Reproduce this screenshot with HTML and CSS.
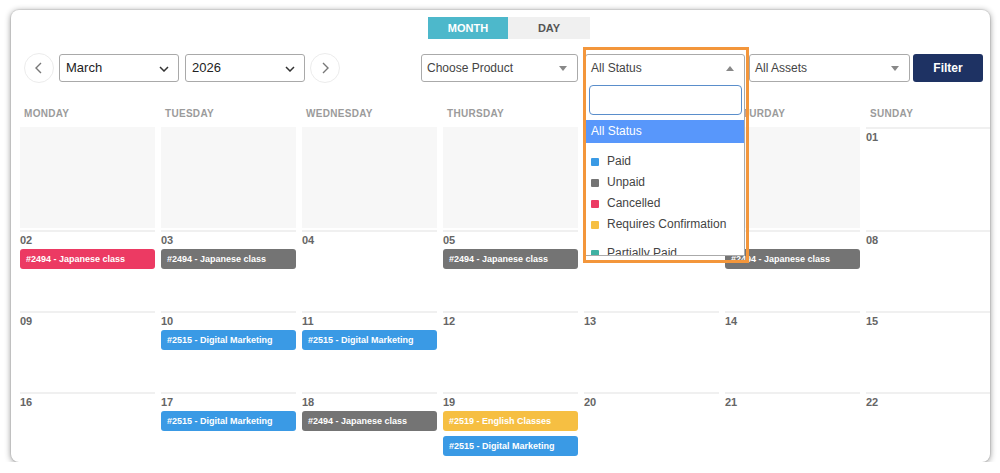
FILE: index.html
```html
<!DOCTYPE html>
<html lang="en">
<head>
    <meta charset="UTF-8">
    <title>Bookings calendar</title>
    <link rel="stylesheet" href="styles.css">
</head>
<body>
    <div class="card">
        <div class="view-toggle">
            <button class="view-btn active">MONTH</button>
            <button class="view-btn">DAY</button>
        </div>

        <div class="toolbar">
            <button class="nav-btn nav-prev">
                <svg width="10" height="12" viewBox="0 0 10 12"><path d="M7 1 L2 6 L7 11" fill="none" stroke="#777" stroke-width="1.4"/></svg>
            </button>
            <div class="select select-month">March
                <svg class="chev" width="10" height="6" viewBox="0 0 10 6"><path d="M1 1 L5 5 L9 1" fill="none" stroke="#333" stroke-width="1.5"/></svg>
            </div>
            <div class="select select-year">2026
                <svg class="chev" width="10" height="6" viewBox="0 0 10 6"><path d="M1 1 L5 5 L9 1" fill="none" stroke="#333" stroke-width="1.5"/></svg>
            </div>
            <button class="nav-btn nav-next">
                <svg width="10" height="12" viewBox="0 0 10 12"><path d="M3 1 L8 6 L3 11" fill="none" stroke="#777" stroke-width="1.4"/></svg>
            </button>

            <div class="s2 s2-product">Choose Product <span class="tri"></span></div>
            <div class="s2 s2-status">All Status <span class="tri up"></span></div>
            <div class="s2 s2-assets">All Assets <span class="tri"></span></div>
            <button class="filter-btn">Filter</button>
        </div>

        <div class="calendar">
            <div class="day-names">
                <div>Monday</div>
                <div>Tuesday</div>
                <div>Wednesday</div>
                <div>Thursday</div>
                <div>Friday</div>
                <div>Saturday</div>
                <div>Sunday</div>
            </div>

            <div class="week week-first">
                <div class="cell empty"></div>
                <div class="cell empty"></div>
                <div class="cell empty"></div>
                <div class="cell empty"></div>
                <div class="cell empty"></div>
                <div class="cell empty"></div>
                <div class="cell"><div class="num">01</div></div>
            </div>

            <div class="week">
                <div class="cell"><div class="num">02</div><div class="event cancelled">#2494 - Japanese class</div></div>
                <div class="cell"><div class="num">03</div><div class="event unpaid">#2494 - Japanese class</div></div>
                <div class="cell"><div class="num">04</div></div>
                <div class="cell"><div class="num">05</div><div class="event unpaid">#2494 - Japanese class</div></div>
                <div class="cell"><div class="num">06</div></div>
                <div class="cell"><div class="num">07</div><div class="event unpaid">#2494 - Japanese class</div></div>
                <div class="cell"><div class="num">08</div></div>
            </div>

            <div class="week">
                <div class="cell"><div class="num">09</div></div>
                <div class="cell"><div class="num">10</div><div class="event paid">#2515 - Digital Marketing</div></div>
                <div class="cell"><div class="num">11</div><div class="event paid">#2515 - Digital Marketing</div></div>
                <div class="cell"><div class="num">12</div></div>
                <div class="cell"><div class="num">13</div></div>
                <div class="cell"><div class="num">14</div></div>
                <div class="cell"><div class="num">15</div></div>
            </div>

            <div class="week">
                <div class="cell"><div class="num">16</div></div>
                <div class="cell"><div class="num">17</div><div class="event paid">#2515 - Digital Marketing</div></div>
                <div class="cell"><div class="num">18</div><div class="event unpaid">#2494 - Japanese class</div></div>
                <div class="cell"><div class="num">19</div><div class="event pending">#2519 - English Classes</div><div class="event paid">#2515 - Digital Marketing</div></div>
                <div class="cell"><div class="num">20</div></div>
                <div class="cell"><div class="num">21</div></div>
                <div class="cell"><div class="num">22</div></div>
            </div>
        </div>

        <!-- open status dropdown -->
        <div class="dropdown">
            <div class="search"></div>
            <ul class="options">
                <li class="selected">All Status</li>
                <li class="first"><span class="dot paid"></span>Paid</li>
                <li><span class="dot unpaid"></span>Unpaid</li>
                <li><span class="dot cancelled"></span>Cancelled</li>
                <li><span class="dot pending"></span>Requires Confirmation</li>
                <li class="last"><span class="dot partial"></span>Partially Paid</li>
            </ul>
        </div>
        <div class="highlight"></div>
    </div>
</body>
</html>
```

FILE: styles.css
```css
* {
    box-sizing: border-box;
}
body {
    margin: 0;
    background-color: #fff;
    font-family: "Liberation Sans", Arial, sans-serif;
}
.card {
    position: relative;
    margin: 10px 0 0 11px;
    width: 979px;
    height: 452px;
    padding: 7px 0 0 9px;
    border-radius: 8px;
    background-color: #fff;
    box-shadow: 0 0 0 1px rgba(0, 0, 0, 0.06), 0 1px 6px rgba(0, 0, 0, 0.45);
    overflow: hidden;
}

/* month / day switch */
.view-toggle {
    display: flex;
    margin-left: 408px;
    height: 22px;
}
.view-btn {
    width: 82px;
    border: none;
    background-color: #f0f0f0;
    color: #555;
    font-family: inherit;
    font-size: 11px;
    font-weight: bold;
    padding: 0;
}
.view-btn.active {
    width: 80px;
    background-color: #4db8cb;
    color: #fff;
}

/* toolbar */
.toolbar {
    display: flex;
    align-items: center;
    margin-top: 15px;
    height: 28px;
}
.nav-btn {
    width: 30px;
    height: 30px;
    border: 1px solid #ececec;
    border-radius: 50%;
    background: #fff;
    display: flex;
    align-items: center;
    justify-content: center;
    padding: 0;
}
.nav-prev {
    margin-left: 4px;
}
.nav-next {
    margin-left: 5px;
}
.select {
    position: relative;
    width: 120px;
    height: 28px;
    border: 1px solid #a9a9a9;
    border-radius: 3px;
    padding-left: 6px;
    font-size: 13px;
    line-height: 26px;
    color: #222;
}
.select-month {
    margin-left: 5px;
}
.select-year {
    margin-left: 6px;
}
.chev {
    position: absolute;
    right: 9px;
    top: 11px;
}
.s2 {
    position: relative;
    height: 28px;
    border: 1px solid #aaa;
    border-radius: 3px;
    padding-left: 5px;
    font-size: 12px;
    line-height: 26px;
    color: #444;
}
.s2-product {
    width: 157px;
    margin-left: 81px;
}
.s2-status {
    width: 160px;
    margin-left: 7px;
    border-radius: 3px 3px 0 0;
}
.s2-assets {
    width: 161px;
    margin-left: 4px;
}
.tri {
    position: absolute;
    right: 10px;
    top: 11px;
    width: 0;
    height: 0;
    border-left: 4px solid transparent;
    border-right: 4px solid transparent;
    border-top: 5px solid #888;
}
.tri.up {
    border-top: none;
    border-bottom: 5px solid #888;
}
.filter-btn {
    width: 70px;
    height: 28px;
    margin-left: 3px;
    border: none;
    border-radius: 3px;
    background-color: #1e3263;
    color: #fff;
    font-family: inherit;
    font-size: 12px;
    font-weight: bold;
}

/* calendar grid */
.calendar {
    margin-top: 18px;
}
.day-names,
.week {
    display: grid;
    grid-template-columns: repeat(7, 135px);
    column-gap: 6px;
}
.day-names {
    height: 27px;
}
.day-names div {
    padding-left: 4px;
    font-size: 10px;
    font-weight: bold;
    line-height: 27px;
    letter-spacing: 0.3px;
    text-transform: uppercase;
    color: #9b9b9b;
}
.week {
    height: 81px;
}
.week-first {
    height: 103px;
}
.week-first .cell.empty {
    height: 101px;
    border-top: none;
    background-color: #f7f7f7;
}
.cell {
    border-top: 2px solid #f0f0f0;
    padding-top: 1px;
}
.num {
    font-size: 11px;
    font-weight: bold;
    line-height: 14px;
    color: #666;
}
.event {
    margin-top: 2px;
    height: 20px;
    padding-left: 6px;
    border-radius: 3px;
    font-size: 9px;
    font-weight: bold;
    line-height: 20px;
    color: #fff;
    white-space: nowrap;
    overflow: hidden;
}
.event + .event {
    margin-top: 5px;
}
.paid {
    background-color: #3a9ae5;
}
.unpaid {
    background-color: #747474;
}
.cancelled {
    background-color: #ec3a63;
}
.pending {
    background-color: #f6bf42;
}
.partial {
    background-color: #3fb1a3;
}

/* status dropdown */
.dropdown {
    position: absolute;
    left: 574px;
    top: 71px;
    width: 160px;
    height: 175px;
    border: 1px solid #aaa;
    border-top: none;
    background-color: #fff;
    overflow: hidden;
}
.search {
    margin: 4px 2px 0 3px;
    height: 30px;
    border: 1px solid #5a8ecb;
    border-radius: 4px;
}
.options {
    list-style: none;
    margin: 5px 0 0;
    padding: 0;
}
.options li {
    height: 21px;
    padding-left: 5px;
    font-size: 12px;
    line-height: 21px;
    color: #444;
    display: flex;
    align-items: center;
}
.options li.selected {
    height: 23px;
    background-color: #5897fb;
    color: #fff;
}
.options li.first {
    margin-top: 8px;
}
.options li.last {
    margin-top: 8px;
}
.dot {
    width: 8px;
    height: 8px;
    border-radius: 1px;
    margin-right: 8px;
}
.highlight {
    position: absolute;
    left: 572px;
    top: 37px;
    width: 166px;
    height: 216px;
    border: 3px solid #f3963b;
}
```
